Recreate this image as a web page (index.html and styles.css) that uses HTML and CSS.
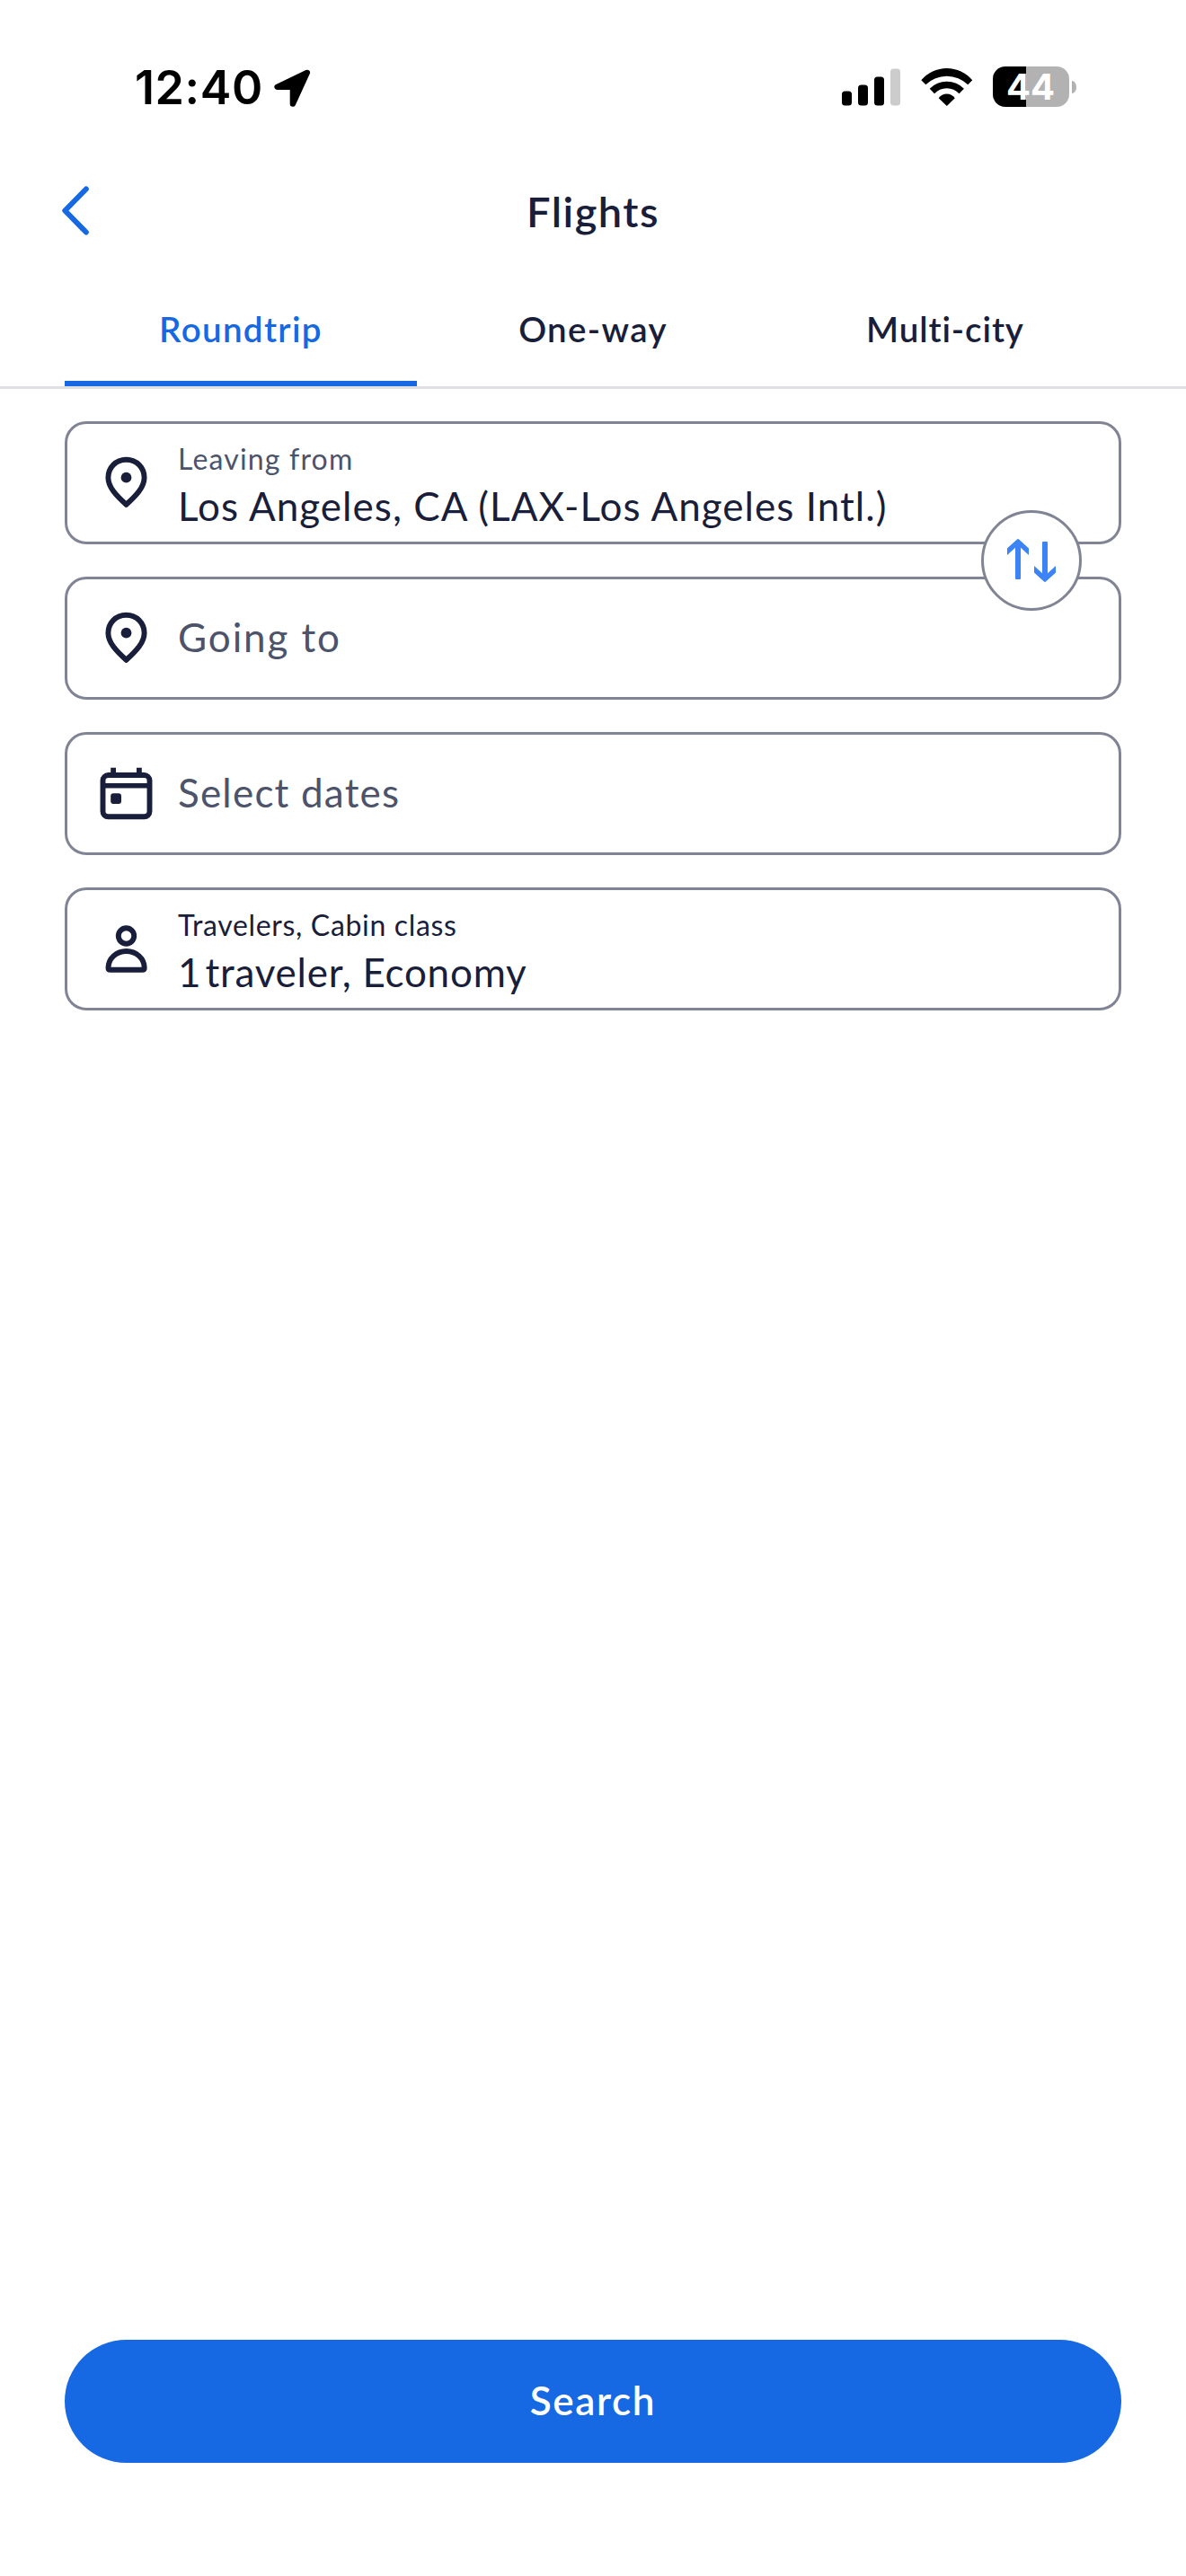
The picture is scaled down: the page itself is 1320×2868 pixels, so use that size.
FILE: index.html
```html
<!DOCTYPE html>
<html lang="en">
<head>
<meta charset="utf-8">
<title>Flights</title>
<link rel="stylesheet" href="styles.css">
</head>
<body>
<div class="screen">
  <div class="status">
    <div class="status-left">
      <span class="time">12:40</span>
      <svg class="location" width="44" height="44" viewBox="0 0 44 44"><path d="M37.8 5L4.6 20.8H21.9V39.6Z" fill="#000" stroke="#000" stroke-width="6.4" stroke-linejoin="round"/></svg>
    </div>
    <div class="status-right">
      <svg class="signal" width="65" height="42" viewBox="0 0 65 42">
        <rect x="0" y="25.5" width="11" height="16" rx="3.5"/>
        <rect x="18" y="18.5" width="11" height="23" rx="3.5"/>
        <rect x="36" y="9.5" width="11" height="32" rx="3.5"/>
        <rect x="54" y="0.5" width="11" height="41" rx="3.5" fill="#ccc"/>
      </svg>
      <svg class="wifi" width="60" height="44" viewBox="0 0 60 44">
        <path d="M1.3 14.3A37 37 0 0 1 58.2 14.3L53.3 19.3A33.5 33.5 0 0 0 6.3 19.3Z"/>
        <path d="M10.7 23.7A26.8 26.8 0 0 1 48.9 23.7L43.5 29.3A18.7 18.7 0 0 0 16 29.3Z"/>
        <path d="M20.7 34.3A11 11 0 0 1 38.8 34.3L29.8 43Z"/>
      </svg>
      <div class="battery"><span class="battery-body">44</span><span class="battery-nub"></span></div>
    </div>
  </div>

  <header class="nav">
    <svg class="back" width="36" height="60" viewBox="0 0 36 60"><path d="M29.8 5.5L6.3 29.5L29.8 53.5" fill="none" stroke="#1668e3" stroke-width="6" stroke-linecap="round" stroke-linejoin="round"/></svg>
    <h1 class="title">Flights</h1>
  </header>

  <nav class="tabs">
    <a class="tab tab-active">Roundtrip</a>
    <a class="tab">One-way</a>
    <a class="tab tab-multi">Multi-city</a>
  </nav>

  <main class="form">
    <div class="route">
      <div class="field">
        <svg class="icon" viewBox="0 0 69 69"><path d="M34.5 8.7C22.8 8.7 14.4 17.7 14.4 28.7C14.4 39.5 23.5 48.8 34.5 58.8C45.5 48.8 54.6 39.5 54.6 28.7C54.6 17.7 46.2 8.7 34.5 8.7Z" class="line"/><circle cx="34.5" cy="28.7" r="5.9"/></svg>
        <div class="stack"><span class="label leaving">Leaving from</span><span class="value city">Los Angeles, CA (LAX-Los Angeles Intl.)</span></div>
      </div>
      <div class="field">
        <svg class="icon" viewBox="0 0 69 69"><path d="M34.5 8.7C22.8 8.7 14.4 17.7 14.4 28.7C14.4 39.5 23.5 48.8 34.5 58.8C45.5 48.8 54.6 39.5 54.6 28.7C54.6 17.7 46.2 8.7 34.5 8.7Z" class="line"/><circle cx="34.5" cy="28.7" r="5.9"/></svg>
        <span class="placeholder going">Going to</span>
      </div>
      <button class="swap" aria-label="Swap">
        <svg width="54" height="48" viewBox="0 0 54 48" fill="#3c84f5">
          <path id="arrow" d="M10.7.8Q12-.6 13.3.8L24 10.6V18L15 9.8V44Q15 45 14 45H10Q9 45 9 44V9.8L0 18V10.6Z"/>
          <use href="#arrow" transform="rotate(180 27 24)"/>
        </svg>
      </button>
    </div>
    <div class="field">
      <svg class="icon" viewBox="0 0 69 69">
        <rect x="8.5" y="14" width="52" height="46.3" rx="6" class="line"/>
        <path d="M17.2 5.7h5.8v6h-5.8zM46 5.7h5.8v6H46zM9 23h51v5.6H9z"/>
        <rect x="17.2" y="34.3" width="11.8" height="11.8" rx="3"/>
      </svg>
      <span class="placeholder dates">Select dates</span>
    </div>
    <div class="field">
      <svg class="icon" viewBox="0 0 69 69"><circle cx="34.5" cy="20" r="8.7" class="line"/><path d="M14.5 55.5C14.5 45 23.5 37 34.6 37S54.7 45 54.7 55.5Q54.7 57.8 52.5 57.8H16.7Q14.5 57.8 14.5 55.5Z" class="line"/></svg>
      <div class="stack"><span class="label travelers">Travelers, Cabin class</span><span class="value count"><span class="digit">1</span> traveler, Economy</span></div>
    </div>
  </main>

  <button class="search">Search</button>
</div>
</body>
</html>
```
FILE: styles.css
```css
* { box-sizing: border-box; }

body {
  margin: 0;
  background: #fff;
  color: #191e3b;
  font-family: Lato, "Open Sans", sans-serif;
}

.screen {
  display: flex;
  flex-direction: column;
  width: 1320px;
  height: 2868px;
  padding-bottom: 126px;
}

/* Status bar */
.status {
  display: flex;
  justify-content: space-between;
  align-items: center;
  height: 196px;
  padding: 0 122px 0 150px;
  color: #000;
}

.status-left { display: flex; align-items: center; gap: 12px; }

.time {
  width: 142px;
  font: 600 52px/64px Inter, sans-serif;
  letter-spacing: .6px;
}

.status-right {
  display: flex;
  align-items: center;
  margin-top: -3px;
}

.signal { margin-right: 22px; }
.wifi { margin-right: 21px; }
.battery { display: flex; align-items: center; gap: 3px; }

.battery-body {
  width: 85px;
  height: 45px;
  padding-right: 1px;
  border-radius: 14px;
  background: linear-gradient(90deg, #000 37px, #b2b2b2 37px);
  color: #fff;
  font: 700 40px/45px Inter, sans-serif;
  text-align: center;
}

.battery-nub {
  width: 5px;
  height: 14px;
  border-radius: 0 5px 5px 0 / 0 7px 7px 0;
  background: #b2b2b2;
}

/* Navigation bar */
.nav {
  display: grid;
  grid-template-columns: 72px 1fr 72px;
  align-items: center;
  height: 78px;
  padding: 0 66px;
}

.title {
  margin: 0;
  font-size: 47px;
  font-weight: 600;
  line-height: 56px;
  letter-spacing: 1.5px;
  text-align: center;
}

/* Tabs */
.tabs {
  display: grid;
  grid-template-columns: repeat(3, 1fr);
  height: 159px;
  padding: 25px 72px 0;
  border-bottom: 3px solid #dfe0e4;
}

.tab {
  padding-top: 44px;
  font-size: 38.5px;
  font-weight: 600;
  line-height: 46px;
  letter-spacing: 1.35px;
  text-align: center;
}

.tab-multi { letter-spacing: .9px; }

.tab-active {
  border-bottom: 6px solid #1668e3;
  color: #1668e3;
}

/* Form */
.form,
.route {
  display: flex;
  flex-direction: column;
  gap: 36px;
}

.form { padding: 36px 72px 0; }
.route { position: relative; }

.field {
  display: flex;
  align-items: center;
  gap: 23px;
  height: 137px;
  padding: 0 31px;
  border: 3px solid #818494;
  border-radius: 24px;
}

.icon { flex: none; width: 69px; height: 69px; fill: #191e3b; }
.line { fill: none; stroke: #191e3b; stroke-width: 5.9; stroke-linejoin: round; }

.stack {
  display: flex;
  flex-direction: column;
  align-self: flex-start;
  gap: 5px;
  padding-top: 18px;
  white-space: nowrap;
}

.label { font-size: 32px; line-height: 41px; }
.value,
.placeholder { font-size: 44px; line-height: 54px; white-space: nowrap; }
.placeholder { padding-bottom: 3px; color: #4d536b; }

.leaving { color: #4d536b; letter-spacing: 1.18px; }
.city { letter-spacing: 1.04px; }
.going { letter-spacing: 1.9px; }
.dates { letter-spacing: 1.2px; }
.travelers { letter-spacing: .66px; }
.count { letter-spacing: .76px; }
.digit { letter-spacing: -7px; }

/* Overlaps both route fields */
.swap {
  position: absolute;
  top: 99px;
  right: 44px;
  display: flex;
  align-items: center;
  justify-content: center;
  width: 112px;
  height: 112px;
  padding: 0;
  border: 3px solid #818494;
  border-radius: 50%;
  background: #fff;
}

.search {
  height: 137px;
  margin: auto 72px 0;
  padding: 0 0 3px;
  border: 0;
  border-radius: 69px;
  background: #1668e3;
  color: #fff;
  font: 600 44px/54px Lato, "Open Sans", sans-serif;
  letter-spacing: 1.6px;
}
```
